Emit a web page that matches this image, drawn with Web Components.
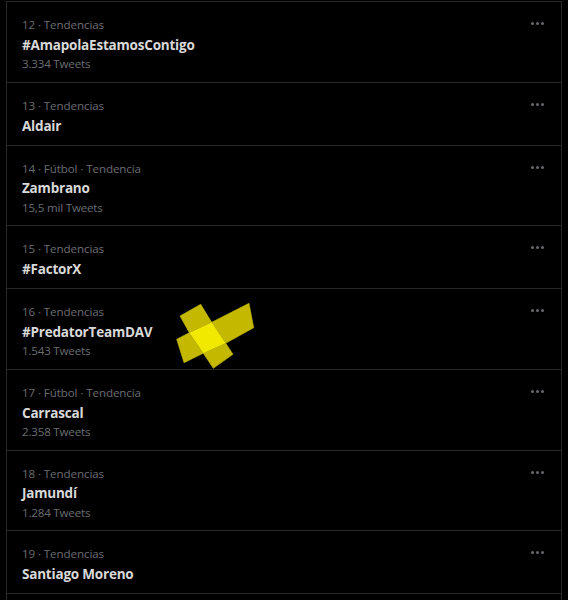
<!DOCTYPE html>
<html>
<head>
<meta charset="utf-8">
<title>Tendencias</title>
<style>
html, body { margin: 0; height: 100%; background: #000; overflow: hidden; }
</style>
</head>
<body>
<trend-list>
  <trend-row meta="12 · Tendencias" name="#AmapolaEstamosContigo" count="3.334 Tweets"></trend-row>
  <trend-row meta="13 · Tendencias" name="Aldair"></trend-row>
  <trend-row meta="14 · Fútbol · Tendencia" name="Zambrano" count="15,5 mil Tweets"></trend-row>
  <trend-row meta="15 · Tendencias" name="#FactorX"></trend-row>
  <trend-row meta="16 · Tendencias" name="#PredatorTeamDAV" count="1.543 Tweets"></trend-row>
  <trend-row meta="17 · Fútbol · Tendencia" name="Carrascal" count="2.358 Tweets"></trend-row>
  <trend-row meta="18 · Tendencias" name="Jamundí" count="1.284 Tweets"></trend-row>
  <trend-row meta="19 · Tendencias" name="Santiago Moreno"></trend-row>
</trend-list>
<yellow-mark></yellow-mark>
<script>
class TrendList extends HTMLElement {
  constructor() {
    super();
    this.attachShadow({mode: "open"}).innerHTML = `<style>
      :host {
        display: block;
        box-sizing: border-box;
        width: 556px;
        height: 600px;
        margin: 1px 0 0 6px;
        border-top: 1px solid #26282a;
        border-left: 1px solid #26282a;
        border-right: 1px solid #26282a;
        font-family: "Open Sans", "Noto Sans", sans-serif;
      }
    </style><slot></slot>`;
  }
}

class TrendRow extends HTMLElement {
  constructor() {
    super();
    this.attachShadow({mode: "open"});
  }

  connectedCallback() {
    const count = this.getAttribute("count");
    this.shadowRoot.innerHTML = `<style>
      :host {
        display: flex;
        justify-content: space-between;
        box-sizing: border-box;
        padding: 14px 17px 8px 15px;
        border-bottom: 1px solid #26282a;
      }
      .meta, .count { color: #6a6d70; font-size: 11.6px; line-height: 18px; letter-spacing: -0.1px; }
      .name { color: #d9d9d9; font-size: 13.5px; font-weight: 700; line-height: 21px; padding-top: 0.75px; letter-spacing: -0.2px; }
      .count { margin: -0.75px 0 0.75px; letter-spacing: -0.2px; }
      .dots { display: flex; gap: 2px; margin-top: 6px; height: 3px; }
      .dots i { width: 3px; height: 3px; border-radius: 50%; background: #66696c; }
    </style>
    <div>
      <div class="meta">${this.getAttribute("meta")}</div>
      <div class="name">${this.getAttribute("name")}</div>
      ${count ? `<div class="count">${count}</div>` : ""}
    </div>
    <div class="dots"><i></i><i></i><i></i></div>`;
  }
}

class YellowMark extends HTMLElement {
  constructor() {
    super();
    this.attachShadow({mode: "open"}).innerHTML = `<style>
      :host { position: absolute; left: 170px; top: 300px; width: 90px; height: 72px; }
      svg { display: block; }
      .flap { fill: #c4b900; stroke: #c4b900; stroke-width: 0.6; }
    </style>
    <svg width="90" height="72" viewBox="170 300 90 72">
      <polygon class="flap" points="180,316 200.7,304.3 211.7,322.3 189.3,332.7"/>
      <polygon class="flap" points="211.7,322.3 249,303.3 253.7,327.7 225.7,343.3"/>
      <polygon class="flap" points="176.7,339.3 189.3,332.7 203.3,353.3 184,362.7"/>
      <polygon class="flap" points="203.3,353.3 225.7,343.3 233,354.3 213.3,368.3"/>
      <polygon fill="#f2e900" points="189.3,332.7 211.7,322.3 225.7,343.3 203.3,353.3"/>
    </svg>`;
  }
}

customElements.define("trend-list", TrendList);
customElements.define("trend-row", TrendRow);
customElements.define("yellow-mark", YellowMark);
</script>
</body>
</html>
